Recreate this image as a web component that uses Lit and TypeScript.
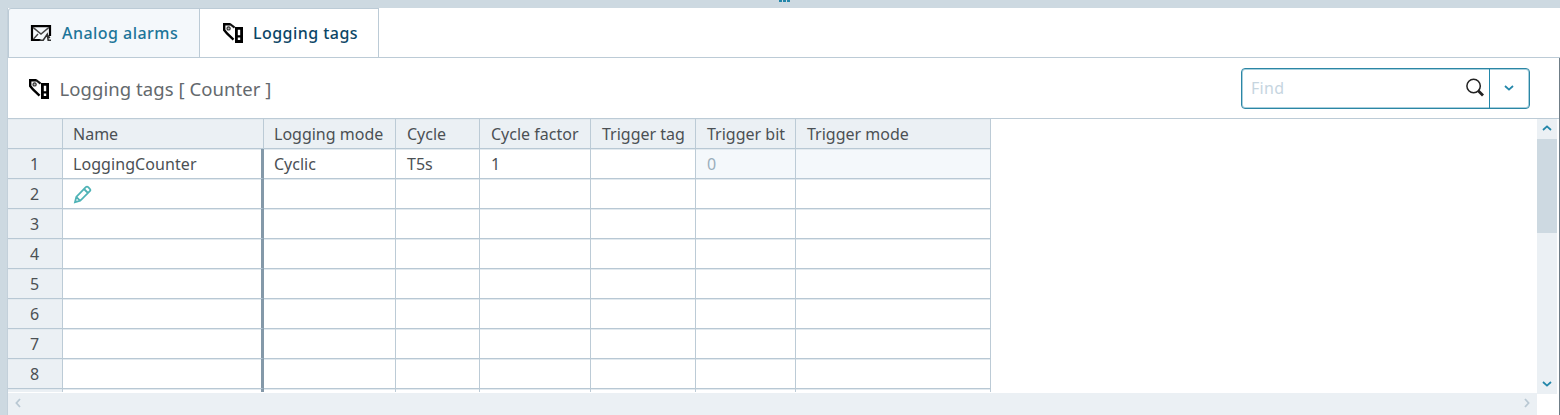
import { LitElement, html, css, svg } from "lit";
import { customElement } from "lit/decorators.js";
import { classMap } from "lit/directives/class-map.js";

const COLUMNS = ["Name", "Logging mode", "Cycle", "Cycle factor", "Trigger tag", "Trigger bit", "Trigger mode"];
const ROWS: string[][] = [["LoggingCounter", "Cyclic", "T5s", "1", "", "0", ""]];
const ROW_COUNT = 9;

const tagIcon = html`<svg class="icon" width="22" height="22" viewBox="0 0 22 22">
  <path d="M8.5 2.2H2.2V8L5 11.5 11.5 17.6" fill="none" stroke="#000" stroke-width="2.4"/>
  <path d="M8 2 12.6 5.6" fill="none" stroke="#111" stroke-width="2.2"/>
  <circle cx="6.6" cy="6.4" r="1.6" fill="#bbb" stroke="#333" stroke-width="1.2"/>
  <path d="M13 5h8v16h-8z" fill="#000"/><path d="M15.8 7.7h2.4v5.6h-2.4zM15.8 15.6h2.4v2.4h-2.4z" fill="#fff"/>
</svg>`;

const mailIcon = html`<svg class="icon" width="22" height="22" viewBox="0 0 22 22">
  <path d="M10.5 18H2V4.2H20V14" fill="none" stroke="#000" stroke-width="2.2"/>
  <path d="M3 5.4 11 12 19 5.4M3.5 17 8 12" fill="none" stroke="#444" stroke-width="1.4"/>
  <path d="M9.5 18.2H13.2L17.2 12.4 18.2 18.2H21M17 12.5 19.8 16" fill="none" stroke="#333" stroke-width="1.6"/>
</svg>`;

const chevron = (d: string) => html`<svg width="12" height="12" viewBox="0 0 12 12">
  ${svg`<path d=${d} fill="none" stroke="currentColor" stroke-width="1.8"/>`}
</svg>`;
const DOWN = "M2 4 6 7.6 10 4";
const UP = "M2 8 6 4.4 10 8";
const LEFT = "M8 2 4.4 6 8 10";
const RIGHT = "M4 2 7.6 6 4 10";

const pencil = html`<svg class="pencil" width="20" height="20" viewBox="0 0 20 20">
  <path d="M2 18.2 3.3 12.9 12.8 3.2Q14 2 15.2 3.2L16.8 4.8Q18 6 16.8 7.2L7.2 16.8ZM11 5 15 9M3.3 12.9 7.2 16.8" fill="none" stroke="#4fb3b6" stroke-width="1.8"/>
</svg>`;

@customElement("tag-grid")
class TagGrid extends LitElement {
  static styles = css`
    :host { display: block; overflow: hidden; }
    .row {
      display: grid; box-sizing: border-box; height: 30px;
      grid-template-columns: 55px 201px 132px 84px 111px 105px 100px 195px;
      grid-template-rows: 30px;
      width: 983px;
    }
    .cell {
      box-sizing: border-box; border-right: 1px solid #bccbd6; border-bottom: 1px solid #b8c8d4;
      box-shadow: inset 0 1px 0 #e3eaef;
      padding: 1px 0 0 11px; line-height: 28px; font-size: 16px; white-space: nowrap; color: #4b5054;
      background: #fff; display: flex; align-items: center;
    }
    .header .cell, .cell.index { background: #ebf0f4; }
    .cell.index { padding: 1px 1px 0 0; justify-content: center; }
    .cell:nth-child(2), .cell:nth-child(3) { padding-left: 10px; }
    .cell.frozen { border-right: 3px solid #8499a9; letter-spacing: 0.07px; }
    .cell.disabled { background: #f4f8fb; color: #9aaebb; }
    .pencil { display: block; }
  `;

  private content(row: number, col: number) {
    if (row === 1 && col === 0) return pencil;
    return ROWS[row]?.[col] ?? "";
  }

  render() {
    return html`
      <div class="row header"><div class="cell index"></div>${COLUMNS.map((c) => html`<div class="cell"><span class="label">${c}</span></div>`)}</div>
      ${Array.from({ length: ROW_COUNT }, (_, r) => html`<div class="row">
        <div class="cell index"><span>${r < 8 ? r + 1 : ""}</span></div>
        ${COLUMNS.map((_c, i) => html`<div class=${classMap({ cell: true, frozen: i === 0, disabled: r === 0 && i >= 5 })}><span>${this.content(r, i)}</span></div>`)}
      </div>`)}
    `;
  }
}

@customElement("app-root")
class AppRoot extends LitElement {
  static styles = css`
    :host { display: block; width: 1560px; height: 415px; overflow: hidden; background: #fff; font-family: "Noto Sans", sans-serif; }
    .splitter { height: 8px; background: #cdd9e1; display: flex; justify-content: center; gap: 1px; padding-left: 8px; box-sizing: border-box; }
    .grip { width: 3px; height: 2px; background: #2387aa; }
    .main { display: flex; height: 407px; }
    .side { box-sizing: border-box; width: 8px; background: #cdd9e1; border-right: 1px solid #c3d0da; }
    .panel { flex: 1; display: flex; flex-direction: column; }
    .tabs { display: flex; height: 50px; box-sizing: border-box; border-bottom: 1px solid #bccbd6; }
    .tab {
      box-sizing: border-box; height: 49px; display: flex; align-items: center; border-top: 1px solid #bccbd6;
      border-right: 1px solid #bccbd6; font-size: 16px; font-weight: 500; white-space: nowrap; letter-spacing: 0.46px;
    }
    .tab.idle { width: 192px; background: #f4f8fb; color: #1c7599; padding-left: 21px; gap: 10px; border-left: 1px solid #bccbd6; border-top-left-radius: 3px; }
    .tab.active { width: 179px; color: #0b4666; padding-left: 22px; gap: 9px; }
    .body { flex: 1; display: flex; flex-direction: column; border-right: 1px solid #6f7d87; min-height: 0; }
    .bar { box-sizing: border-box; height: 61px; display: flex; align-items: center; border-bottom: 1px solid #bccbd6; padding: 0 29px 0 20px; }
    .bar .icon { margin-top: 1px; }
    .title { margin-left: 9.5px; font-size: 18.5px; letter-spacing: 0.06px; color: #64696d; flex: 1; white-space: nowrap; }
    .find { box-sizing: border-box; width: 289px; height: 41px; border: 1px solid #2b86a5; box-shadow: inset 0 0 0 1px #a9d0dd; border-radius: 4px; display: flex; align-items: center; }
    .hint { flex: 1; padding-left: 9px; color: #c6d5df; font-size: 16px; letter-spacing: 0.3px; }
    .glass { margin-right: 4px; }
    .drop { box-sizing: border-box; width: 40px; height: 39px; border-left: 1px solid #2387aa; display: flex; align-items: center; justify-content: center; padding-right: 2px; color: #2387aa; }
    .area { display: flex; height: 273px; }
    .grid { flex: 1; }
    .vscroll { width: 20px; margin-right: 2px; height: 275px; background: #ebf0f4; display: flex; flex-direction: column; justify-content: space-between; color: #2387aa; }
    .up, .down { height: 20px; display: flex; align-items: center; justify-content: center; }
    .up { padding-bottom: 2px; box-sizing: border-box; }
    .thumb { height: 94px; background: #cdd9e1; margin-bottom: auto; }
    .hscroll { box-sizing: border-box; margin-top: 1px; width: 1529px; height: 22px; background: #ebf0f4; display: flex; justify-content: space-between; padding: 4px 4px 0 4px; color: #b9c8d3; }
    svg { flex: none; display: block; }
  `;

  render() {
    return html`
      <div class="splitter"><i class="grip"></i><i class="grip"></i><i class="grip"></i></div>
      <div class="main">
        <div class="side"></div>
        <div class="panel">
          <div class="tabs">
            <div class="tab idle">${mailIcon}<span>Analog alarms</span></div>
            <div class="tab active">${tagIcon}<span>Logging tags</span></div>
          </div>
          <div class="body">
            <div class="bar">
              ${tagIcon}<span class="title">Logging tags [ Counter ]</span>
              <div class="find">
                <span class="hint">Find</span>
                <svg class="glass" width="20" height="20" viewBox="0 0 20 20"><circle cx="8.6" cy="8" r="6.7" fill="none" stroke="#222" stroke-width="1.5"/><path d="M13 12.5 18 17.5" stroke="#222" stroke-width="2.8"/></svg>
                <div class="drop">${chevron(DOWN)}</div>
              </div>
            </div>
            <div class="area">
              <tag-grid class="grid"></tag-grid>
              <div class="vscroll">
                <div class="up">${chevron(UP)}</div>
                <div class="thumb"></div>
                <div class="down">${chevron(DOWN)}</div>
              </div>
            </div>
            <div class="hscroll">${chevron(LEFT)}${chevron(RIGHT)}</div>
          </div>
        </div>
      </div>
    `;
  }
}
